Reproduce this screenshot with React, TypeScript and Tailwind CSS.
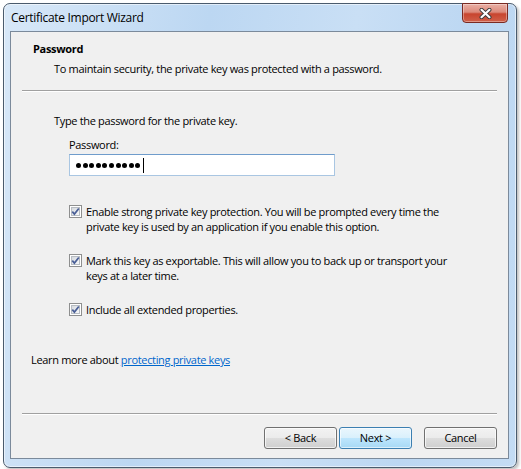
import React from "react";

const font = { fontFamily: '"Open Sans", "Liberation Sans", sans-serif' };

function Check() {
  return (
    <span className="relative mt-[1px] flex h-[13px] w-[13px] shrink-0 items-center justify-center border border-[#8e8f8f] bg-white">
      <span className="absolute inset-[1px] border border-[#b7bcc2] bg-[linear-gradient(135deg,#d6dadf,#f7f8f9)]" />
      <svg className="relative" width="9" height="9" viewBox="0 0 9 9">
        <path d="M1.3 4.6 L3.4 7.1 L7.8 1.4" stroke="#4a5f97" strokeWidth="1.7" fill="none" />
      </svg>
    </span>
  );
}

function CheckRow({ lines }: { lines: string[] }) {
  return (
    <div className="ml-[58px] flex gap-[4px]">
      <Check />
      <div className="text-[11px] leading-[15px] text-black whitespace-nowrap">
        {lines.map((l, i) => (
          <div key={i}>{l}</div>
        ))}
      </div>
    </div>
  );
}

function Button({ label, primary }: { label: string; primary?: boolean }) {
  return (
    <div
      className={
        primary
          ? "flex h-[22px] w-[73px] items-center justify-center rounded-[3px] border border-[#3c7fb1] bg-[linear-gradient(#eaf6fd_0%,#d9f0fc_50%,#bee6fd_50%,#a7d9f5_100%)] shadow-[inset_0_0_0_1px_rgba(255,255,255,0.6)] text-[11px] text-black"
          : "flex h-[22px] w-[73px] items-center justify-center rounded-[3px] border border-[#707070] bg-[linear-gradient(#f2f2f2_0%,#ebebeb_50%,#dddddd_50%,#cfcfcf_100%)] shadow-[inset_0_0_0_1px_rgba(255,255,255,0.7)] text-[11px] text-black"
      }
    >
      {label}
    </div>
  );
}

export default function App() {
  return (
    <div className="h-[469px] w-[521px] overflow-hidden bg-white tracking-[-0.33px]" style={font}>
      <div className="relative ml-[3px] mt-[3px] flex h-[465px] w-[514px] flex-col rounded-[7px] border border-[#4a5b6d] bg-[linear-gradient(100deg,#d8e8f8_0%,#bcd7f2_35%,#c9dff5_60%,#bcd7f2_80%,#c4dcf4_100%)] shadow-[inset_0_0_0_1px_rgba(255,255,255,0.55),2px_2px_3px_rgba(0,0,0,0.25)]">
        {/* title bar */}
        <div className="flex h-[27px] items-center pl-[7px] pt-[1px] text-[12px] tracking-[-0.3px] text-black">
          Certificate Import Wizard
        </div>
        {/* close button */}
        <div className="absolute right-[8px] top-[-1px] flex h-[20px] w-[46px] items-center justify-center rounded-b-[4px] border border-[#7a2a22] bg-[linear-gradient(#eab0a5_0%,#dc8a7b_45%,#c8452f_55%,#d0604a_100%)] shadow-[inset_0_0_0_1px_rgba(255,255,255,0.35)]">
          <svg width="13" height="11" viewBox="0 0 13 11">
            <path d="M2.5 1.8 L10.5 9.2 M10.5 1.8 L2.5 9.2" stroke="#3b3b3b" strokeWidth="4" strokeLinecap="round" />
            <path d="M2.5 1.8 L10.5 9.2 M10.5 1.8 L2.5 9.2" stroke="#ffffff" strokeWidth="2.2" strokeLinecap="round" />
          </svg>
        </div>
        {/* client */}
        <div className="mb-[8px] ml-[6px] mr-[7px] flex flex-1 flex-col border border-[#7b8a9b] bg-[#f0f0f0] text-black">
          <div className="pl-[22px] pt-[9px] text-[11px] font-bold leading-[16px]">Password</div>
          <div className="mt-[4px] pl-[43px] text-[11px] leading-[16px]">
            To maintain security, the private key was protected with a password.
          </div>
          <div className="mx-[11px] mt-[13px] h-[2px] border-b border-t border-b-white border-t-[#a0a0a0]" />
          <div className="mt-[21px] pl-[43px] text-[11px] leading-[16px]">Type the password for the private key.</div>
          <div className="mt-[8px] pl-[58px] text-[11px] leading-[16px]">Password:</div>
          <div className="ml-[58px] mt-[1px] flex h-[22px] w-[266px] items-center gap-[1.6px] border border-[#a9c6e2] border-t-[#6f9ccb] bg-white pl-[6px]">
            {Array.from({ length: 10 }).map((_, i) => (
              <span key={i} className="h-[5px] w-[5px] rounded-full bg-black" />
            ))}
            <span className="ml-[1.5px] h-[15px] w-[1px] bg-black" />
          </div>
          <div className="mt-[28px]">
            <CheckRow
              lines={[
                "Enable strong private key protection. You will be prompted every time the",
                "private key is used by an application if you enable this option.",
              ]}
            />
          </div>
          <div className="mt-[19px]">
            <CheckRow
              lines={[
                "Mark this key as exportable. This will allow you to back up or transport your",
                "keys at a later time.",
              ]}
            />
          </div>
          <div className="mt-[19px]">
            <CheckRow lines={["Include all extended properties."]} />
          </div>
          <div className="mt-[35px] pl-[20px] text-[11px] leading-[16px]">
            Learn more about <span className="text-[#0066cc] underline">protecting private keys</span>
          </div>
          <div className="mx-[11px] mt-[45px] h-[2px] border-b border-t border-b-white border-t-[#a0a0a0]" />
          <div className="mt-[12px] flex justify-end pr-[11px]">
            <Button label="< Back" />
            <div className="ml-[2px]">
              <Button label="Next >" primary />
            </div>
            <div className="ml-[12px]">
              <Button label="Cancel" />
            </div>
          </div>
        </div>
      </div>
    </div>
  );
}
